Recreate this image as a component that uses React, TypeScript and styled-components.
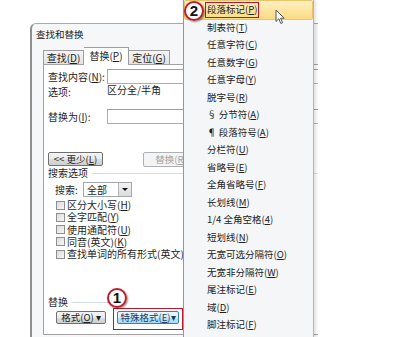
import React from "react";
import styled, { createGlobalStyle, css } from "styled-components";

const GlobalStyle = createGlobalStyle`
  html, body {
    margin: 0;
    padding: 0;
    background: #fff;
  }
  body {
    font-family: "Noto Sans CJK SC", "Noto Sans", sans-serif;
    color: #1e1e1e;
  }
`;

const Stage = styled.div`
  position: relative;
  width: 400px;
  height: 337px;
  overflow: hidden;
  box-sizing: border-box;
  padding: 23px 0 0 30px;
  background: #fff;
`;

const Dialog = styled.div`
  width: 288px;
  height: 330px;
  box-sizing: border-box;
  border-left: 2px solid #8e8e8e;
  border-top: 1px solid #a9a9a9;
  border-top-left-radius: 6px;
  background: #f6f7f8;
  overflow: hidden;
`;

const Title = styled.div`
  height: 23px;
  box-sizing: border-box;
  padding: 3px 0 0 4px;
  font-size: 9.5px;
  line-height: 14px;
  color: #222;
`;

const TabRow = styled.div`
  display: flex;
  align-items: flex-end;
  height: 17px;
  margin-left: 11px;
  position: relative;
  z-index: 1;
`;

const Tab = styled.div<{ $active?: boolean }>`
  box-sizing: border-box;
  width: ${(p) => (p.$active ? 45 : 41)}px;
  height: ${(p) => (p.$active ? 18 : 14)}px;
  margin-bottom: ${(p) => (p.$active ? -1 : 0)}px;
  border: 1px solid #9c9c9c;
  border-bottom: none;
  font-size: 10px;
  line-height: ${(p) => (p.$active ? 16 : 13)}px;
  text-align: center;
  background: ${(p) =>
    p.$active ? "#fff" : "linear-gradient(#f5f5f5, #e3e3e3)"};
  ${(p) =>
    !p.$active &&
    css`
      & + & {
        border-left: none;
      }
    `}
`;

const Panel = styled.div`
  width: 300px;
  height: 271px;
  margin-left: 11px;
  box-sizing: border-box;
  border: 1px solid #a3a3a3;
  background: #fff;
  padding: 4px 0 0 4px;
  font-size: 10px;
`;

const FieldRow = styled.div<{ $top?: number }>`
  display: flex;
  align-items: center;
  height: 15px;
  margin-top: ${(p) => p.$top ?? 0}px;
`;

const FieldLabel = styled.span`
  width: 59px;
  flex-shrink: 0;
  line-height: 15px;
`;

const Input = styled.div`
  flex: 1;
  height: 15px;
  box-sizing: border-box;
  border: 1px solid #abadb3;
  border-top-color: #9a9da5;
  background: #fff;
`;

const OptionRow = styled.div`
  display: flex;
  height: 12px;
  line-height: 12px;
`;

const ButtonRow = styled.div<{ $top: number; $indent?: number; $gap: number }>`
  display: flex;
  align-items: flex-start;
  height: 15px;
  margin-top: ${(p) => p.$top}px;
  padding-left: ${(p) => p.$indent ?? 0}px;
  gap: ${(p) => p.$gap}px;
`;

const Button = styled.div<{ $w: number; $h?: number; $disabled?: boolean; $hot?: boolean }>`
  width: ${(p) => p.$w}px;
  height: ${(p) => p.$h ?? 14}px;
  flex-shrink: 0;
  box-sizing: border-box;
  border: 1px solid #707070;
  border-radius: 2px;
  background: linear-gradient(#f4f4f4 0%, #ebebeb 50%, #dddddd 51%, #cfcfcf 100%);
  font-size: 9.5px;
  line-height: ${(p) => (p.$h ?? 14) - 2}px;
  text-align: center;
  white-space: nowrap;
  color: #1e1e1e;
  ${(p) =>
    p.$disabled &&
    css`
      border-color: #adb2b5;
      background: #f4f4f4;
      color: #a2a2a2;
    `}
  ${(p) =>
    p.$hot &&
    css`
      border-color: #3c7fb1;
      background: linear-gradient(#eaf6fd 0%, #d9f0fc 50%, #bee6fd 51%, #a7d9f5 100%);
      color: #1c3e63;
    `}
`;

const GroupTitle = styled.div<{ $top?: number; $line?: number }>`
  display: flex;
  align-items: center;
  height: 12px;
  line-height: 12px;
  margin-top: ${(p) => p.$top ?? 0}px;
  gap: 4px;
  &::after {
    content: "";
    height: 1px;
    background: #d5dbe0;
    ${(p) => (p.$line ? `width: ${p.$line}px;` : "flex: 1;")}
  }
`;

const SearchRow = styled.div`
  display: flex;
  align-items: center;
  height: 15px;
  margin-top: 3px;
  padding-left: 7px;
`;

const SearchLabel = styled.span`
  width: 28px;
  line-height: 15px;
`;

const Select = styled.div`
  display: flex;
  width: 49px;
  height: 15px;
  box-sizing: border-box;
  border: 1px solid #a3a6ab;
  background: #fff;
`;

const SelectValue = styled.span`
  flex: 1;
  padding-left: 3px;
  line-height: 13px;
`;

const SelectArrow = styled.span`
  width: 12px;
  border-left: 1px solid #b4b4b4;
  background: linear-gradient(#f3f3f3, #dcdcdc);
  display: flex;
  align-items: center;
  justify-content: center;
  &::before {
    content: "";
    border-left: 3px solid transparent;
    border-right: 3px solid transparent;
    border-top: 3px solid #111;
  }
`;

const CheckList = styled.div`
  margin-top: 2px;
  padding-left: 8px;
`;

const CheckRow = styled.div`
  display: flex;
  align-items: center;
  height: 12.25px;
  line-height: 12px;
  gap: 2px;
`;

const CheckBox = styled.span`
  width: 9px;
  height: 9px;
  flex-shrink: 0;
  box-sizing: border-box;
  border: 1px solid #8e8f8f;
  background: linear-gradient(135deg, #dcdcdc, #f6f6f6);
`;

const U = styled.span`
  text-decoration: underline;
  text-underline-offset: 1px;
`;

const Menu = styled.div`
  position: absolute;
  left: 183px;
  top: 0;
  width: 131px;
  height: 337px;
  box-sizing: border-box;
  padding-top: 1.25px;
  background: #f5f6f7;
  border-left: 1px solid #979797;
  border-right: 1px solid #a6b7d2;
  box-shadow: 2px 0 3px rgba(0, 0, 0, 0.12);
  overflow: hidden;
  z-index: 2;
`;

const MenuItem = styled.div<{ $active?: boolean }>`
  position: relative;
  height: 17.5px;
  padding-left: 23px;
  font-size: 9.5px;
  line-height: 17.5px;
  color: #222;
  white-space: nowrap;
  span {
    position: relative;
  }
  ${(p) =>
    p.$active &&
    css`
      &::before {
        content: "";
        position: absolute;
        left: 0;
        right: 0;
        top: -1.25px;
        bottom: -1.25px;
        border: 1px solid #e8c46a;
        border-radius: 2px;
        background: linear-gradient(#fff0c2, #fcdb82);
      }
    `}
`;

const Mark = styled.div<{ $x: number; $y: number; $w: number; $h: number }>`
  position: absolute;
  left: ${(p) => p.$x}px;
  top: ${(p) => p.$y}px;
  width: ${(p) => p.$w}px;
  height: ${(p) => p.$h}px;
  box-sizing: border-box;
  border: 1.5px solid #c4142c;
  z-index: 3;
`;

const Badge = styled.div<{ $x: number; $y: number }>`
  position: absolute;
  left: ${(p) => p.$x}px;
  top: ${(p) => p.$y}px;
  width: 20px;
  height: 20px;
  box-sizing: border-box;
  border: 2px solid #b8202c;
  border-radius: 50%;
  background: radial-gradient(circle at 40% 35%, #fff 55%, #f1e4e4 100%);
  box-shadow: 1px 1px 2px rgba(0, 0, 0, 0.45);
  font-family: "Liberation Sans", Arial, sans-serif;
  font-weight: bold;
  font-size: 15px;
  line-height: 16px;
  text-align: center;
  color: #111;
  z-index: 4;
`;

const Cursor = styled.svg`
  position: absolute;
  left: 275px;
  top: 9px;
  z-index: 4;
`;

const menuItems: [string, string][] = [
  ["段落标记", "P"],
  ["制表符", "T"],
  ["任意字符", "C"],
  ["任意数字", "G"],
  ["任意字母", "Y"],
  ["脱字号", "R"],
  ["§ 分节符", "A"],
  ["¶ 段落符号", "A"],
  ["分栏符", "U"],
  ["省略号", "E"],
  ["全角省略号", "F"],
  ["长划线", "M"],
  ["1/4 全角空格", "4"],
  ["短划线", "N"],
  ["无宽可选分隔符", "O"],
  ["无宽非分隔符", "W"],
  ["尾注标记", "E"],
  ["域", "D"],
  ["脚注标记", "F"],
  ["图形", "I"],
];

const checks: [string, string][] = [
  ["区分大小写", "H"],
  ["全字匹配", "Y"],
  ["使用通配符", "U"],
  ["同音(英文)", "K"],
  ["查找单词的所有形式(英文)", "W"],
];

const Key = ({ k }: { k: string }) => (
  <>
    (<U>{k}</U>)
  </>
);

export default function App() {
  return (
    <>
      <GlobalStyle />
      <Stage>
        <Dialog>
          <Title>查找和替换</Title>
          <TabRow>
            <Tab>
              查找<Key k="D" />
            </Tab>
            <Tab $active>
              替换<Key k="P" />
            </Tab>
            <Tab>
              定位<Key k="G" />
            </Tab>
          </TabRow>
          <Panel>
            <FieldRow>
              <FieldLabel>
                查找内容<Key k="N" />:
              </FieldLabel>
              <Input />
            </FieldRow>
            <OptionRow>
              <FieldLabel>选项:</FieldLabel>
              <span>区分全/半角</span>
            </OptionRow>
            <FieldRow $top={13}>
              <FieldLabel>
                替换为<Key k="I" />:
              </FieldLabel>
              <Input />
            </FieldRow>
            <ButtonRow $top={28} $gap={40}>
              <Button $w={55}>
                &lt;&lt; 更少<Key k="L" />
              </Button>
              <Button $w={56} $h={15} $disabled>
                替换<Key k="R" />
              </Button>
            </ButtonRow>
            <GroupTitle>搜索选项</GroupTitle>
            <SearchRow>
              <SearchLabel>搜索:</SearchLabel>
              <Select>
                <SelectValue>全部</SelectValue>
                <SelectArrow />
              </Select>
            </SearchRow>
            <CheckList>
              {checks.map(([label, k]) => (
                <CheckRow key={label}>
                  <CheckBox />
                  <span>
                    {label}
                    <Key k={k} />
                  </span>
                </CheckRow>
              ))}
            </CheckList>
            <GroupTitle $top={36} $line={40}>
              替换
            </GroupTitle>
            <ButtonRow $top={3} $indent={8} $gap={11}>
              <Button $w={50} $h={13}>
                格式<Key k="O" /> ▾
              </Button>
              <Button $w={62} $h={13} $hot>
                特殊格式<Key k="E" />▾
              </Button>
            </ButtonRow>
          </Panel>
        </Dialog>

        <Menu>
          {menuItems.map(([label, k], i) => (
            <MenuItem key={i} $active={i === 0}>
              <span>
                {label}
                <Key k={k} />
              </span>
            </MenuItem>
          ))}
        </Menu>

        <Mark $x={205} $y={2} $w={54} $h={16} />
        <Badge $x={184} $y={1}>2</Badge>
        <Mark $x={113} $y={308} $w={70} $h={22} />
        <Badge $x={107} $y={288}>1</Badge>

        <Cursor width="11" height="16" viewBox="0 0 11 16">
          <path
            d="M1 1 L1 12.5 L3.8 9.8 L5.8 14.5 L7.6 13.7 L5.6 9.2 L9.2 9.2 Z"
            fill="#fff"
            stroke="#555"
            strokeWidth="1"
            strokeLinejoin="round"
          />
        </Cursor>
      </Stage>
    </>
  );
}
